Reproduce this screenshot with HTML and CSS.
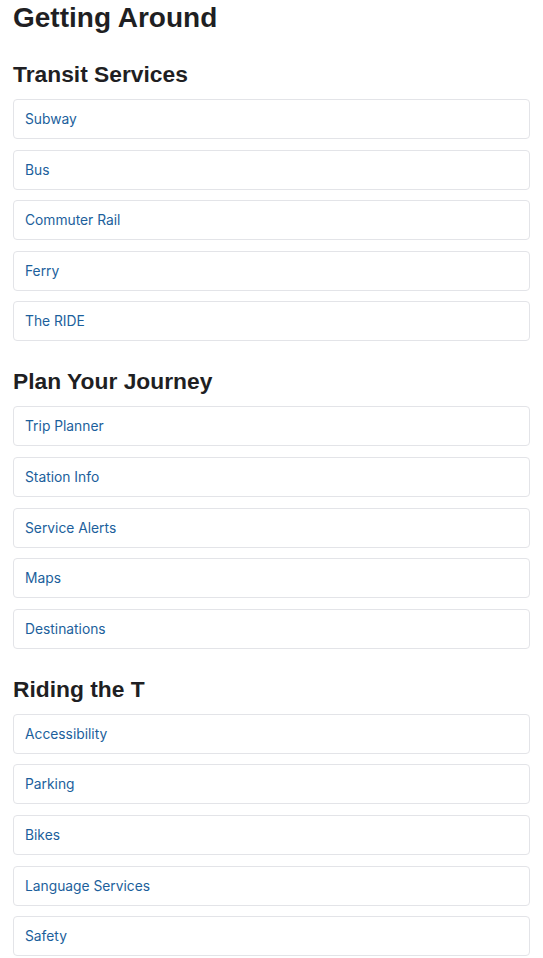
FILE: index.html
```html
<!DOCTYPE html>
<html lang="en">
<head>
<meta charset="utf-8">
<title>Getting Around</title>
<link rel="stylesheet" href="styles.css">
</head>
<body>
<main class="page">
  <h1 class="title">Getting Around</h1>

  <section class="section">
    <h2 class="section-title">Transit Services</h2>
    <ul class="link-list">
      <li class="link-item"><a href="#">Subway</a></li>
      <li class="link-item"><a href="#">Bus</a></li>
      <li class="link-item"><a href="#">Commuter Rail</a></li>
      <li class="link-item"><a href="#">Ferry</a></li>
      <li class="link-item"><a href="#">The RIDE</a></li>
    </ul>
  </section>

  <section class="section">
    <h2 class="section-title">Plan Your Journey</h2>
    <ul class="link-list">
      <li class="link-item"><a href="#">Trip Planner</a></li>
      <li class="link-item"><a href="#">Station Info</a></li>
      <li class="link-item"><a href="#">Service Alerts</a></li>
      <li class="link-item"><a href="#">Maps</a></li>
      <li class="link-item"><a href="#">Destinations</a></li>
    </ul>
  </section>

  <section class="section">
    <h2 class="section-title">Riding the T</h2>
    <ul class="link-list">
      <li class="link-item"><a href="#">Accessibility</a></li>
      <li class="link-item"><a href="#">Parking</a></li>
      <li class="link-item"><a href="#">Bikes</a></li>
      <li class="link-item"><a href="#">Language Services</a></li>
      <li class="link-item"><a href="#">Safety</a></li>
    </ul>
  </section>
</main>
</body>
</html>
```

FILE: styles.css
```css
html, body {
  margin: 0;
  padding: 0;
  background: #ffffff;
}

body {
  font-family: "Liberation Sans", Arial, sans-serif;
  color: #1f1f23;
}

.page {
  padding: 1px 13px 20px 13px;
}

.title {
  margin: 0;
  font-size: 28px;
  line-height: 34px;
  font-weight: bold;
  color: #1f1f23;
}

.section {
  margin-top: 26px;
}

.section + .section {
  margin-top: 27px;
}

.section-title {
  margin: 0 0 11px 0;
  font-size: 22.8px;
  line-height: 27px;
  font-weight: bold;
  color: #1f1f23;
}

.link-list {
  list-style: none;
  margin: 0;
  padding: 0;
  display: flex;
  flex-direction: column;
  gap: 10.6px;
}

.link-item {
  border: 1px solid #e3e4e8;
  border-radius: 4px;
  padding: 10px 11px;
  font-family: Inter, "Noto Sans", sans-serif;
  font-size: 13.8px;
  line-height: 18px;
}

.link-item a {
  color: #1c5f9c;
  text-decoration: none;
}
```
